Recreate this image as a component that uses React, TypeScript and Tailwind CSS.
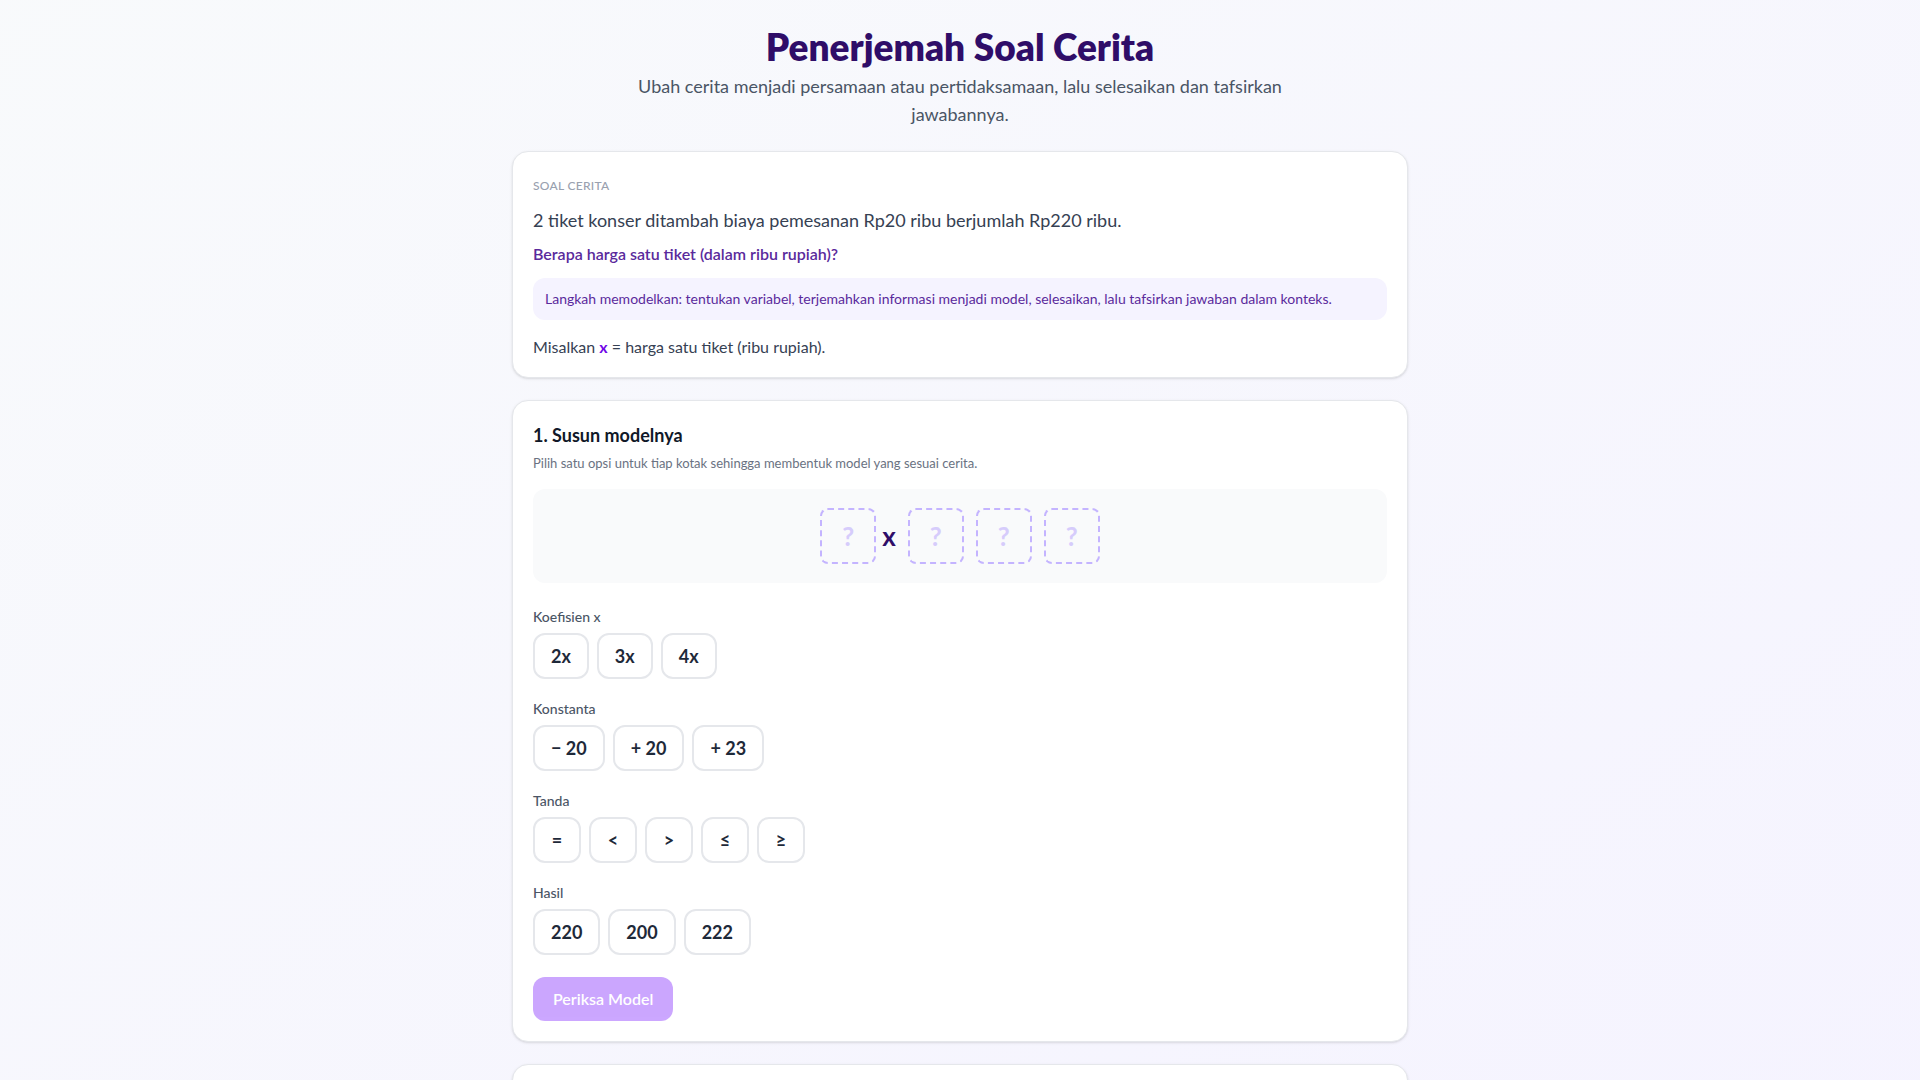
import { useState } from "react";

type Slot = "coef" | "const" | "sign" | "result";

const GROUPS: { key: Slot; label: string; options: string[] }[] = [
  { key: "coef", label: "Koefisien x", options: ["2x", "3x", "4x"] },
  { key: "const", label: "Konstanta", options: ["\u2212 20", "+ 20", "+ 23"] },
  { key: "sign", label: "Tanda", options: ["=", "<", ">", "\u2264", "\u2265"] },
  { key: "result", label: "Hasil", options: ["220", "200", "222"] },
];

function SlotBox({ value }: { value?: string }) {
  return (
    <div className="flex h-14 w-14 items-center justify-center rounded-lg border-2 border-dashed border-violet-300 text-[26px] font-bold text-[#d6ccfb]">
      {value ?? "?"}
    </div>
  );
}

export default function App() {
  const [picked, setPicked] = useState<Partial<Record<Slot, string>>>({});
  const complete = GROUPS.every((g) => picked[g.key]);

  return (
    <div className="min-h-screen bg-gradient-to-br from-slate-50 to-violet-50 font-['Lato','Segoe_UI',sans-serif] text-gray-800">
      <div className="mx-auto max-w-4xl pt-[27px] pb-10">
        {/* Header */}
        <header className="text-center">
          <h1 className="text-[37px] leading-10 font-extrabold text-violet-950">Penerjemah Soal Cerita</h1>
          <p className="mx-auto mt-[5px] max-w-2xl text-lg leading-7 text-gray-600">
            Ubah cerita menjadi persamaan atau pertidaksamaan, lalu selesaikan dan tafsirkan jawabannya.
          </p>
        </header>

        <div className="mt-[23px] flex flex-col gap-[22px]">
          {/* Story card */}
          <section className="rounded-2xl border border-gray-200 bg-white px-5 pt-[22px] pb-[18px] shadow-sm">
            <div className="text-xs leading-6 font-medium tracking-wide text-gray-400 uppercase">Soal Cerita</div>
            <p className="mt-2 text-lg leading-7 text-gray-700">
              2 tiket konser ditambah biaya pemesanan Rp20 ribu berjumlah Rp220 ribu.
            </p>
            <p className="mt-2 text-base leading-6 font-semibold text-[#5a2a9c]">
              Berapa harga satu tiket (dalam ribu rupiah)?
            </p>
            <div className="mt-3 rounded-xl bg-violet-50 px-3 py-3 text-sm leading-[18px] text-[#5a2a9c]">
              Langkah memodelkan: tentukan variabel, terjemahkan informasi menjadi model, selesaikan, lalu tafsirkan jawaban dalam konteks.
            </div>
            <p className="mt-[15px] text-base leading-6 text-gray-700">
              Misalkan <span className="font-bold text-violet-700">x</span> = harga satu tiket (ribu rupiah).
            </p>
          </section>

          {/* Model builder */}
          <section className="rounded-2xl border border-gray-200 bg-white p-5 shadow-sm">
            <h2 className="text-lg leading-7 font-bold text-gray-900">1. Susun modelnya</h2>
            <p className="mt-1 text-[13px] leading-5 text-gray-500">
              Pilih satu opsi untuk tiap kotak sehingga membentuk model yang sesuai cerita.
            </p>

            <div className="mt-4 flex items-center justify-center gap-3 rounded-xl bg-gray-50 py-[19px]">
              <div className="flex items-center gap-1.5">
                <SlotBox value={picked.coef?.replace("x", "")} />
                <span className="text-[26px] font-bold text-violet-950">x</span>
              </div>
              <SlotBox value={picked.const} />
              <SlotBox value={picked.sign} />
              <SlotBox value={picked.result} />
            </div>

            <div className="mt-6 flex flex-col gap-5">
              {GROUPS.map((g) => (
                <div key={g.key}>
                  <div className="text-sm leading-5 font-medium text-gray-600">{g.label}</div>
                  <div className="mt-1.5 flex gap-2">
                    {g.options.map((opt) => (
                      <button
                        key={opt}
                        onClick={() => setPicked((p) => ({ ...p, [g.key]: opt }))}
                        className={`flex h-[46px] min-w-12 items-center justify-center rounded-xl border-2 bg-white px-4 text-lg font-bold ${
                          picked[g.key] === opt ? "border-violet-500 text-violet-700" : "border-gray-200 text-gray-800"
                        }`}
                      >
                        {opt}
                      </button>
                    ))}
                  </div>
                </div>
              ))}
            </div>

            <button
              disabled={!complete}
              className="mt-[22px] h-11 rounded-xl bg-violet-600 px-5 text-base font-semibold text-white disabled:opacity-40"
            >
              Periksa Model
            </button>
          </section>

          {/* Next step (below the fold) */}
          <section className="h-40 rounded-2xl border border-gray-200 bg-white shadow-sm" />
        </div>
      </div>
    </div>
  );
}
